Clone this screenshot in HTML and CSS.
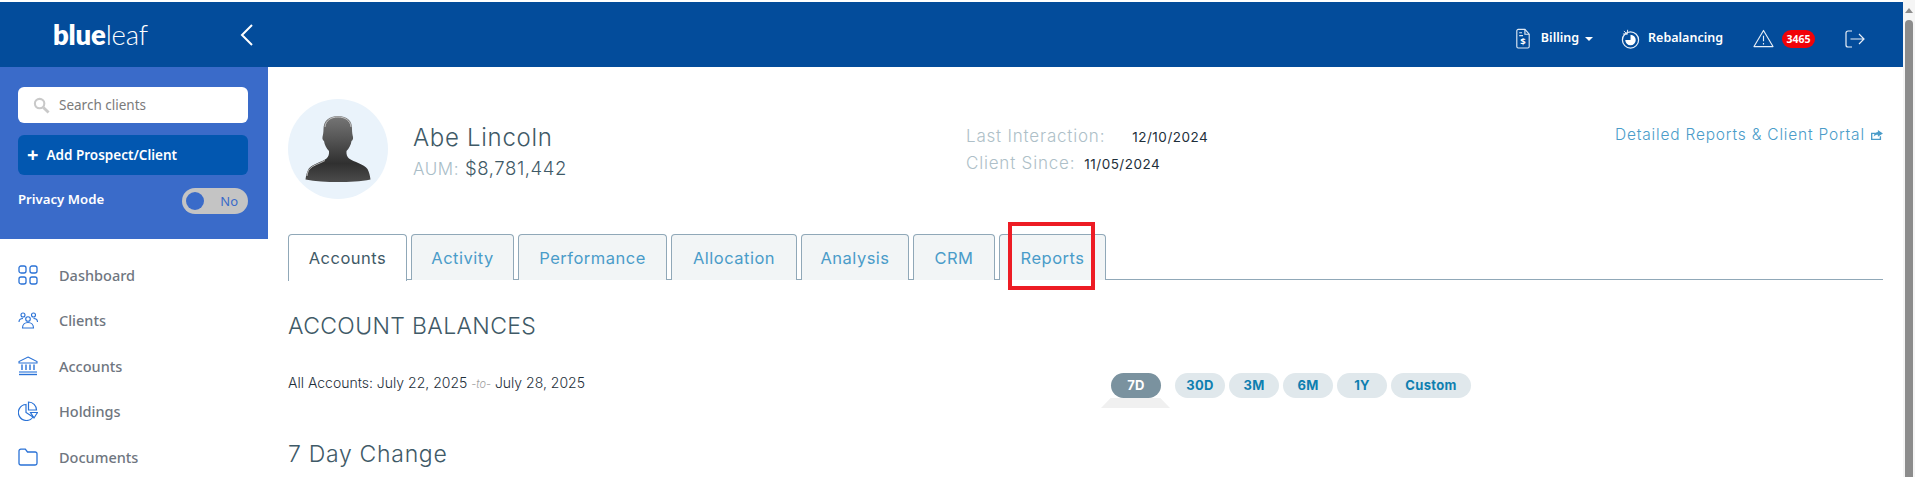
FILE: index.html
```html
<!DOCTYPE html>
<html lang="en">
<head>
<meta charset="utf-8">
<title>Blueleaf - Abe Lincoln</title>
<link rel="stylesheet" href="styles.css">
</head>
<body>
<div class="window">
  <div class="page">
    <header class="topbar">
      <div class="brand">
        <div class="logo"><b>blue</b><span>leaf</span></div>
        <svg class="collapse" viewBox="0 0 13 22" width="13" height="22"><path d="M12 1 2 11 12 21" fill="none" stroke="#fff" stroke-width="2"/></svg>
      </div>
      <nav class="top-actions">
        <a class="top-item billing">
          <svg viewBox="0 0 16 22" width="16" height="21" fill="none" stroke="#dfe8f4" stroke-width="1.2"><path d="M1.500 3a1.500 1.500 0 0 1 1.500-1.500h7l4.500 5V19.500a1.500 1.500 0 0 1-1.500 1.500H3a1.500 1.500 0 0 1-1.500-1.500Z"/><path d="M4 5h3M4 8h4M10 1.500V6.500h4.500"/><text x="8" y="17.500" font-size="10" font-weight="700" fill="#fff" stroke="none" text-anchor="middle" font-family="Noto Sans">$</text></svg>
          <span>Billing</span><i class="caret"></i>
        </a>
        <a class="top-item rebalance">
          <svg viewBox="0 0 20 21" width="19" height="20"><circle cx="10" cy="11.500" r="8.500" fill="none" stroke="#e8eef7" stroke-width="1.300"/><path d="M10 6a5.500 5.500 0 1 1-5.500 5.500H10Z" fill="#fff"/><path d="M3 2 6.500 5.500M7 .8 6.500 5.500 2 5.200" fill="none" stroke="#e8eef7" stroke-width="1"/></svg>
          <span>Rebalancing</span>
        </a>
        <a class="top-item alert">
          <svg viewBox="0 0 22 20" width="21" height="19" fill="none" stroke="#e8eef7" stroke-width="1.200"><path d="M11 1.500 21 18.500H1Z" stroke-linejoin="round"/><path d="M11 7v6M11 14.800v1.400"/></svg>
          <em class="badge">3465</em>
        </a>
        <a class="top-item logout">
          <svg viewBox="0 0 20 18" width="20" height="18" fill="none" stroke="#e8eef7" stroke-width="1.200"><path d="M7 1H3a2 2 0 0 0-2 2v12a2 2 0 0 0 2 2h4"/><path d="M5.500 9H19M14 4l5 5-5 5"/></svg>
        </a>
      </nav>
    </header>
    <div class="body">
      <aside class="sidebar">
        <div class="side-panel">
          <label class="search">
            <svg viewBox="0 0 18 18" width="17" height="17" fill="none" stroke="#c9c9c9" stroke-width="2.200"><circle cx="7" cy="7" r="5"/><path d="m11 11 5.500 5.500" stroke-width="3"/></svg>
            <span>Search clients</span>
          </label>
          <a class="add"><span class="plus">+</span>Add Prospect/Client</a>
          <div class="privacy">
            <span class="privacy-label">Privacy Mode</span>
            <div class="toggle"><i></i><span>No</span></div>
          </div>
        </div>
        <ul class="menu">
          <li><svg viewBox="0 0 20 20" width="20" height="20" fill="none" stroke="#2a72d6" stroke-width="1.300"><rect x="1" y="1" width="7" height="7" rx="2"/><rect x="12" y="1" width="7" height="7" rx="2"/><rect x="1" y="12" width="7" height="7" rx="2"/><rect x="12" y="12" width="7" height="7" rx="2"/></svg>Dashboard</li>
          <li><svg viewBox="0 0 20 17" width="20" height="17" fill="none" stroke="#2a72d6" stroke-width="1.100"><circle cx="5" cy="3" r="2"/><circle cx="15.500" cy="3" r="2"/><circle cx="10" cy="7" r="2.300"/><path d="M1 10c0-2 1.500-3.500 4-3.500M19.500 10c0-2-1.500-3.500-4-3.500M4.500 16c0-3.500 2.500-5.500 5.500-5.500s5.500 2 5.500 5.500Z"/></svg>Clients</li>
          <li><svg viewBox="0 0 20 20" width="20" height="20" fill="none" stroke="#2a72d6" stroke-width="1.100"><path d="M10 1 19 5.500V7H1V5.500Z"/><path d="M4 8.500V14M8 8.500V14M12 8.500V14M16 8.500V14" stroke-width="1.400"/><path d="M1 16h18" stroke-width="1.600" stroke="#6b9fe6"/><path d="M1 18.500h18" stroke-width="1.400"/></svg>Accounts</li>
          <li><svg viewBox="0 0 20 20" width="20" height="20" fill="none" stroke="#2a72d6" stroke-width="1.200"><path d="M8 3.500a8 8 0 1 0 7 12.500L8 11.500Z"/><path d="M10.500 1v8h8a8 8 0 0 0-8-8Z"/><path d="M12.500 11.500h7L16 17Z"/></svg>Holdings</li>
          <li><svg viewBox="0 0 20 18" width="20" height="18" fill="none" stroke="#2a72d6" stroke-width="1.300"><path d="M1 3a1.800 1.800 0 0 1 1.800-1.800h4.500L9.500 4h7.700A1.800 1.800 0 0 1 19 5.800v9.400a1.800 1.800 0 0 1-1.800 1.800H2.800A1.800 1.800 0 0 1 1 15.200Z"/></svg>Documents</li>
        </ul>
      </aside>
      <main class="main">
        <section class="client">
          <div class="avatar">
            <svg viewBox="0 0 66 68" width="66" height="68">
              <defs><linearGradient id="sil" x1="0" y1="0" x2="0" y2="1"><stop offset="0" stop-color="#767676"/><stop offset=".3" stop-color="#5a5a5a"/><stop offset=".72" stop-color="#303030"/><stop offset="1" stop-color="#4c4c4c"/></linearGradient></defs>
              <path d="M33 1C24 1 18.500 6 18.500 14c0 3-.5 6-1 8-.4 2 .5 3.500 1.500 4 .6 4 2.500 7.500 5 10 .3 3-.5 6-2.500 7.500C17 47 7 49 3.500 54 1.800 57 1 61 .5 64.500 10 66.500 22 67 33 67s23-.5 32.500-2.500C65 61 64.200 57 62.500 54 59 49 49 47 44 43.500c-2-1.500-2.800-4.500-2.500-7.500 2.500-2.500 4.400-6 5-10 1-.5 1.900-2 1.500-4-.5-2-1-5-1-8C47.500 6 42 1 33 1Z" fill="url(#sil)"/>
              <path d="M20 12C20.500 5.500 26 2 33 2s12.500 3.500 13 10M2 61c.4-3 1.200-5.300 2.500-7C8 50 15 48.500 20 45.500" fill="none" stroke="#d9d9d9" stroke-width=".8"/>
            </svg>
          </div>
          <div class="identity">
            <h1>Abe Lincoln</h1>
            <p><span>AUM:</span> $8,781,442</p>
          </div>
          <div class="dates">
            <p class="first"><span>Last Interaction:</span><b>12/10/2024</b></p>
            <p><span>Client Since:</span><b>11/05/2024</b></p>
          </div>
          <a class="portal">Detailed Reports &amp; Client Portal
            <svg viewBox="0 0 14 12" width="13" height="11"><path d="M1 4h5v1.500H2.500v5h8V8H12v4H1Z" fill="#4a9cc9"/><path d="M8.500 1 14 4.800 8.500 8.500V6.300C6.500 6.300 5 7 4 8.500 4 5.500 5.500 3.300 8.500 3.200Z" fill="#4a9cc9"/></svg>
          </a>
        </section>
        <div class="tabs">
          <a class="tab active t1">Accounts</a>
          <a class="tab t2">Activity</a>
          <a class="tab t3">Performance</a>
          <a class="tab t4">Allocation</a>
          <a class="tab t5">Analysis</a>
          <a class="tab t6">CRM</a>
          <a class="tab t7">Reports<span class="highlight"></span></a>
        </div>
        <h2 class="balances">ACCOUNT BALANCES</h2>
        <div class="range-row">
          <p class="range">All Accounts: July 22, 2025 <i>-to-</i> July 28, 2025</p>
          <div class="pills">
            <a class="pill on">7D</a>
            <a class="pill first">30D</a>
            <a class="pill">3M</a>
            <a class="pill">6M</a>
            <a class="pill">1Y</a>
            <a class="pill custom">Custom</a>
          </div>
        </div>
        <h2 class="change">7 Day Change</h2>
      </main>
    </div>
  </div>
  <div class="scrollbar"><i class="arrow"></i><i class="thumb"></i></div>
</div>
</body>
</html>
```
FILE: styles.css
```css
* { box-sizing: border-box; }
html, body { margin: 0; height: 100%; overflow: hidden; background: #fff; }
body { font-family: "Noto Sans", sans-serif; padding-top: 2px; }
p, h1, h2, ul { margin: 0; padding: 0; }
.window { display: flex; height: 475px; }
.page { flex: 1; min-width: 0; }

.topbar { height: 65px; background: #034c9b; display: flex; align-items: center; justify-content: space-between; }
.brand { width: 268px; display: flex; align-items: center; padding-left: 53px; }
.logo { font-family: "Lato", sans-serif; font-size: 27.500px; line-height: 1; color: #fff; width: 187px; letter-spacing: -.2px; }
.logo b { font-weight: 800; }
.logo span { font-weight: 300; }
.top-actions { display: flex; align-items: center; padding: 8px 38px 0 0; color: #fff; font-size: 12.500px; font-weight: 600; }
.top-item { display: flex; align-items: center; }
.top-item span { margin-top: -3px; }
.billing svg { margin-right: 10px; }
.rebalance { margin-left: 28px; }
.rebalance svg { margin-right: 8px; }
.alert { margin-left: 30px; }
.logout { margin-left: 30px; }
.caret { width: 0; height: 0; margin-left: 6px; border: 4px solid transparent; border-top-color: #fff; border-bottom: 0; }
.badge { margin-left: 8px; width: 33px; height: 18px; border-radius: 9px; background: #f10208; color: #fff; font-style: normal; font-size: 10.500px; font-weight: 700; display: flex; align-items: center; justify-content: center; }

.body { display: flex; }
.sidebar { width: 268px; flex: none; }
.side-panel { height: 172px; background: #3a6bc9; padding: 20px 20px 0 18px; }
.search { height: 36px; background: #fff; border-radius: 6px; display: flex; align-items: center; padding-left: 15px; color: #7a7a7a; font-size: 13.500px; }
.search svg { margin-right: 9px; }
.add { margin-top: 12px; height: 40px; background: #0257b0; border-radius: 6px; color: #fff; display: flex; align-items: center; padding-left: 9px; font-size: 13.500px; font-weight: 600; }
.plus { font-size: 20px; font-weight: 700; margin-right: 8px; line-height: 1; }
.privacy { margin-top: 13px; display: flex; justify-content: space-between; align-items: center; color: #fff; font-size: 13.200px; font-weight: 600; }
.privacy-label { padding-bottom: 4px; }
.toggle { width: 66px; height: 26px; border-radius: 13px; background: #c4c4c4; display: flex; align-items: center; justify-content: space-between; padding: 0 10px 0 4px; color: #3a6bc9; font-weight: 400; font-size: 13px; }
.toggle i { width: 18px; height: 18px; border-radius: 50%; background: #3a6bc9; }

.menu { list-style: none; padding: 13px 0 0 18px; }
.menu li { height: 45.500px; display: flex; align-items: center; color: #6f7680; font-size: 14.500px; font-weight: 500; }
.menu svg { margin-right: 21px; flex: none; }

.main { flex: 1; min-width: 0; padding: 32px 20px 0 20px; font-family: "Inter", sans-serif; }
.client { display: flex; align-items: center; height: 100px; }
.avatar { width: 100px; height: 100px; border-radius: 50%; background: #eaf3fb; display: flex; align-items: center; justify-content: center; flex: none; }
.identity { margin-left: 25px; width: 553px; padding-top: 6px; color: #3f5a67; }
.identity h1 { font-size: 24px; font-weight: 300; line-height: 30px; letter-spacing: .7px; }
.identity p { font-size: 18.500px; font-weight: 300; line-height: 24px; margin-top: 3px; letter-spacing: .6px; }
.identity p span { color: #a9bdc7; font-size: 17px; }
.dates { width: 0; flex: 1; padding-top: 2px; font-size: 17px; font-weight: 300; color: #aebfc8; letter-spacing: .8px; }
.dates p { line-height: 26px; white-space: nowrap; }
.dates b { font-weight: 400; color: #1e2f3a; font-size: 13.500px; margin-left: 9px; letter-spacing: .5px; }
.dates .first b { margin-left: 27px; }
.portal { color: #4a9cc9; font-size: 15.500px; font-weight: 300; margin-top: -30px; white-space: nowrap; letter-spacing: .8px; }

.tabs { margin-top: 35px; height: 46px; display: flex; gap: 4px; border-bottom: 1px solid #90a8b8; }
.tab { height: 46px; border: 1px solid #90a8b8; border-bottom: 0; border-radius: 4px 4px 0 0; background: #f2f5f6; color: #4a9cc9; font-size: 16.500px; letter-spacing: .5px; font-weight: 400; display: flex; align-items: center; justify-content: center; position: relative; }
.tab.active { background: #fff; color: #3f5a67; height: 47px; }
.t1 { width: 119px; } .t2 { width: 103px; } .t3 { width: 149px; } .t4 { width: 126px; } .t5 { width: 108px; } .t6 { width: 82px; } .t7 { width: 107px; }
.highlight { position: absolute; left: 8px; top: -13px; width: 87px; height: 68px; border: 4px solid #ed1c24; }

.balances { margin-top: 33px; font-size: 23px; font-weight: 300; line-height: 26px; color: #3f5a67; letter-spacing: .35px; }
.range-row { display: flex; margin-top: 34px; }
.range { width: 823px; font-size: 14px; font-weight: 300; color: #1e2f3a; line-height: 18px; padding-top: 1px; white-space: nowrap; }
.range i { color: #a0a0a0; font-size: 11px; }
.pills { display: flex; gap: 4px; font-size: 13px; letter-spacing: .3px; font-weight: 700; position: relative; padding-bottom: 10px; }
.pills::after { content: ""; position: absolute; left: -10px; top: 25px; width: 69px; height: 10px; background: #f0f0f0; clip-path: polygon(14% 0, 86% 0, 100% 100%, 0 100%); }
.pill { width: 50px; height: 25px; border-radius: 13px; background: #e0e8ec; color: #0f7fb0; display: flex; align-items: center; justify-content: center; padding-bottom: 1px; }
.pill.on { background: #7a929f; color: #fff; }
.pill.first { margin-left: 10px; }
.pill.custom { width: 80px; }
.change { margin-top: 32px; font-size: 23px; font-weight: 300; line-height: 28px; color: #3f5a67; letter-spacing: .7px; }

.scrollbar { width: 12px; flex: none; background: #f5f5f5; display: flex; flex-direction: column; align-items: center; height: 477px; margin-top: -2px; padding-top: 8px; }
.arrow { width: 0; height: 0; border: 4px solid transparent; border-top: 0; border-bottom: 5px solid #8c8c8c; }
.thumb { margin-top: 7px; width: 8px; flex: 1; background: #8c8c8c; border-radius: 4px 4px 0 0; }
```
